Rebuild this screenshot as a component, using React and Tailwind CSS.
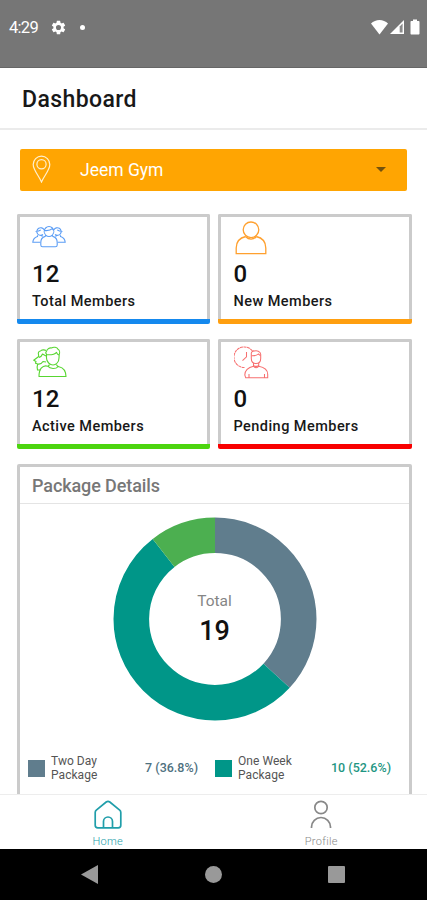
import { useState } from "react";

const stats = [
    { label: "Total Members", value: 12, icon: "group", bar: "bg-[#1589ee]" },
    { label: "New Members", value: 0, icon: "person", bar: "bg-[#ff9f0f]" },
    { label: "Active Members", value: 12, icon: "active", bar: "bg-[#4cd50f]" },
    { label: "Pending Members", value: 0, icon: "pending", bar: "bg-[#f80000]" },
];

const packages = [
    { name: "Two Day Package", count: 7, percent: "36.8%", color: "#607d8d", text: "text-[#4f7180]", width: "w-[170px]" },
    { name: "One Week Package", count: 10, percent: "52.6%", color: "#009688", text: "text-[#1f9683]", width: "w-[176px]" },
    { name: "One Month Package", count: 2, percent: "10.5%", color: "#4caf50", text: "text-[#4caf50]", width: "w-[170px]" },
];

const StatIcon = ({ name }) => {
    if (name === "group") {
        return (
            <svg className="w-[34px] h-[36px]" viewBox="0 0 34 36" fill="none" stroke="#5b9df5" strokeWidth="1.100">
                <path d="M13.500 14.700a4.800 4.800 0 1 1 7 0M12.300 10.500c3 .3 6.500-.2 8-1.800.4.8.8 1.300 1.400 1.700" />
                <path d="M13.700 15.200c2 1.600 4.600 1.600 6.600 0l.5 1.200c3 .8 4.400 3 4.400 6v2.600c0 1.200-.7 1.800-1.800 1.800H10.600c-1.100 0-1.800-.6-1.800-1.800v-2.600c0-3 1.400-5.200 4.400-6Z" />
                <path d="M11 14.500A3.800 3.800 0 1 1 12 9.800M5.500 15.200v1.300C2.200 17.500 1 19.500.8 22.200h7.500M3.600 11.500c2 0 4-.5 5.200-1.600M9 15.200l1.500 1.300" />
                <path d="M23 14.500a3.800 3.800 0 1 0-1-4.700M28.500 15.200v1.300c3.300 1 4.500 3 4.700 5.700h-7.500M30.400 11.500c-2 0-4-.5-5.200-1.600M25 15.200l-1.500 1.300" />
            </svg>
        );
    }
    if (name === "person") {
        return (
            <svg className="w-[34px] h-[36px]" viewBox="0 0 34 36" fill="none" stroke="#ffa02e" strokeWidth="1.300">
                <circle cx="17" cy="9.800" r="7.800" />
                <path d="M11.800 16.500C6 17.800 2.200 22 2.200 28v5.700h29.600V28c0-6-3.800-10.200-9.600-11.500" />
                <path d="M11.800 16.700c3 3.100 7.500 3.100 10.400 0" />
            </svg>
        );
    }
    if (name === "active") {
        return (
            <svg className="w-[35px] h-[36px]" viewBox="0 0 35 36" fill="none" stroke="#58d631" strokeWidth="1.100" strokeLinejoin="round">
                <path d="M14.500 6.500C15 3.500 18 2.500 19.500 3c2-1.500 5.500-.8 6.500 1.300 1.600.7 2 3.200 1.200 5.200l-.2 3.500c0 4-3 7-6 7s-6.500-3-6.500-7V9c-1-.6-1-1.800 0-2.500Z" />
                <path d="M14.800 9.700c4 .3 8-.4 9.700-2.400.5 1.500 1.300 2.300 2.500 2.700" />
                <path d="M17.500 19.500c-.3 1-.8 1.400-1.800 1.700-2.500-.8-5 .2-6.500 2-1.700 2-2.200 4.500-2.200 8.300h27c-.2-6-3-9-7-9.800-1.300-.2-2.200-1-2.600-2.200M15.700 21.200c2.500 3 8 3.200 10.600.3" />
                <path d="M14 5.500c-1.600-1-4.500-.8-5.500.5-2 .2-2.500 2-2 3.500l.2 2-5 3.700 2.300 1.300-.5 1.700 2.200.8c-.5 1.500-1 3.500-.2 6h3M7 12.500c1.500-.5 3-2 3.500-3.500l3.500 2M5.500 19c2.500.5 4.500-.8 5.500-2.500l3 .5" />
            </svg>
        );
    }
    return (
        <svg className="w-[36px] h-[36px]" viewBox="0 0 36 36" fill="none" stroke="#f77070" strokeWidth="1.050">
            <path d="M10.500 22.500A10.300 10.300 0 1 1 19 6.800" strokeDasharray="3 .5" />
            <path d="M12.500 7v4.800l-4 3.800" />
            <path d="M17.300 9c-.3-2 1.500-3.500 3.200-3 2-.7 6 .2 6.200 3.200v4.300c0 3-2 5-4.700 5s-4.700-2-4.700-5Z" />
            <path d="M17.500 10.700c3 .2 5.500-.3 6.800-1.700l2.200 1.700M19.500 18v3.300h5.200V18M19.500 20.500l2.500 1.500 2.700-1.500" />
            <path d="M19.500 21.300c-5.500 1.200-8.500 3.500-8.700 8.700l.9 2.800h22v-3.500c0-4.300-3.200-6.900-9-8M19.500 21.300c1.300 1.800 4 1.800 5.200 0M15 32.500v-3.500M30.500 32.500v-3.500" />
        </svg>
    );
};

const StatusBar = () => (
    <div className="h-[68px] shrink-0 bg-[#767676] border-b border-[#666] flex items-start pl-[9px] pr-[7px] pt-[17px] text-white">
        <span className="text-[16.500px] leading-[22px] tracking-[-0.700px]">4:29</span>
        <svg className="w-[17px] h-[17px] ml-[12px] mt-[1.500px]" viewBox="0 0 24 24" fill="currentColor">
            <path d="M19.140 12.940c.04-.3.060-.61.060-.94 0-.32-.02-.64-.07-.94l2.030-1.580a.49.49 0 0 0 .12-.61l-1.920-3.320a.488.488 0 0 0-.59-.22l-2.390.96c-.5-.38-1.030-.7-1.620-.94l-.36-2.540a.484.484 0 0 0-.48-.41h-3.840c-.24 0-.43.17-.47.41l-.36 2.540c-.59.24-1.130.57-1.620.94l-2.390-.96c-.22-.08-.47 0-.59.22L2.740 8.870c-.12.21-.08.47.12.61l2.030 1.580c-.05.3-.09.63-.09.94s.02.64.07.94l-2.030 1.580a.49.49 0 0 0-.12.61l1.920 3.320c.12.22.37.29.59.22l2.390-.96c.5.38 1.030.7 1.620.94l.36 2.540c.05.24.24.41.48.41h3.840c.24 0 .44-.17.47-.41l.36-2.540c.59-.24 1.130-.56 1.620-.94l2.390.96c.22.08.47 0 .59-.22l1.920-3.320c.12-.22.07-.47-.12-.61l-2.010-1.580zM12 15.600A3.600 3.600 0 1 1 12 8.400a3.600 3.600 0 0 1 0 7.200z" />
        </svg>
        <span className="size-[5px] rounded-full bg-white ml-[13px] mt-[8px]" />
        <div className="ml-auto flex items-start gap-px pt-[2px]">
            <svg className="w-[17px] h-[16px]" viewBox="0 0 17 16" fill="currentColor">
                <path d="M0 4.500C4.500-.2 12.500-.2 17 4.500L8.500 15.500Z" />
            </svg>
            <svg className="w-[16px] h-[16px]" viewBox="0 0 16 16">
                <path d="M15 1v14H1Z" fill="#fff" />
                <path d="M10.700 7.500 13.600 4.600v8.900h-2.900Z" fill="#8b8b8b" />
            </svg>
            <svg className="w-[10px] h-[16px] ml-[4px]" viewBox="0 0 10 16" fill="currentColor">
                <path d="M3 .5h4V2h1.500c.6 0 1 .4 1 1v11.500c0 .6-.4 1-1 1h-7c-.6 0-1-.4-1-1V3c0-.6.4-1 1-1H3Z" />
            </svg>
        </div>
    </div>
);

const Donut = () => {
    let start = 0;
    return (
        <div className="grid place-items-center mx-auto size-[204px]">
            <svg className="col-start-1 row-start-1 size-[204px] -rotate-90" viewBox="0 0 204 204" fill="none">
                {packages.map((p) => {
                    const offset = start;
                    start += p.count;
                    return (
                        <circle
                            key={p.name}
                            cx="102"
                            cy="102"
                            r="83.700"
                            stroke={p.color}
                            strokeWidth="35.600"
                            pathLength="19"
                            strokeDasharray={`${p.count} ${19 - p.count}`}
                            strokeDashoffset={-offset}
                        />
                    );
                })}
            </svg>
            <div className="col-start-1 row-start-1 flex flex-col items-center">
                <span className="text-[15.500px] leading-[20px] text-[#858585]">Total</span>
                <span className="text-[27px] leading-[32px] mt-[4px] font-medium text-[#111]">19</span>
            </div>
        </div>
    );
};

const App = () => {
    const [tab, setTab] = useState("home");

    return (
        <div className="w-full h-screen flex flex-col overflow-hidden bg-white font-['Roboto',sans-serif]">
            <StatusBar />
            <header className="h-[62px] shrink-0 border-b-2 border-[#ebebeb] pt-[2px] px-[22px] flex items-center">
                <h1 className="text-[23px] leading-none font-medium text-[#181818] tracking-[0.400px]">Dashboard</h1>
            </header>

            <main className="flex-1 min-h-0 overflow-hidden pt-[19px] px-[16.500px]">
                <button className="w-[387px] h-[42px] ml-[3.500px] rounded-[2px] bg-[#ffa502] flex items-center pl-[12px] pr-[21px] text-white">
                    <svg className="w-[19px] h-[28px] -mt-[2px]" viewBox="0 0 19 28" fill="none" stroke="#fff0cf" strokeWidth="1.200">
                        <path d="M9.500 27C7 21 1.200 15 1.200 9.500a8.300 8.300 0 0 1 16.600 0C17.800 15 12 21 9.500 27Z" />
                        <circle cx="9.500" cy="9.300" r="4.600" />
                    </svg>
                    <span className="ml-[29px] mt-px text-[17.500px] leading-none">Jeem Gym</span>
                    <svg className="w-[10px] h-[5px] ml-auto -mt-[2px]" viewBox="0 0 10 5" fill="#74520d">
                        <path d="M0 0h10L5 5Z" />
                    </svg>
                </button>

                <div className="grid grid-cols-2 gap-x-[8px] gap-y-[15px] w-[395px] mt-[23px]">
                    {stats.map((s) => (
                        <div key={s.label} className="h-[110px] flex flex-col">
                            <div className="flex-1 rounded-t-[2px] border-[3px] border-b-0 border-[#cbcbcb] pl-[12.500px] pt-[3px]">
                                <StatIcon name={s.icon} />
                                <p className="mt-[4px] text-[24px] leading-[28px] font-medium text-[#111]">{s.value}</p>
                                <p className="mt-[5px] text-[14.500px] leading-[18px] font-medium text-[#181818] tracking-[0.450px]">{s.label}</p>
                            </div>
                            <div className={`h-[5px] rounded-b-[2px] ${s.bar}`} />
                        </div>
                    ))}
                </div>

                <section className="mt-[15px] w-[395px] h-[420px] rounded-[2px] border-[3px] border-[#cbcbcb]">
                    <h2 className="h-[37px] border-b border-[#e4e4e4] pl-[12.500px] text-[18px] leading-[37px] font-medium text-[#777] tracking-[-0.100px]">
                        Package Details
                    </h2>
                    <div className="pt-[13px] pl-px">
                        <Donut />
                    </div>
                    <div className="grid grid-cols-[187px_187px] mt-[32px] pl-[8.500px] gap-y-[9px]">
                        {packages.map((p) => (
                            <div key={p.name} className={`flex items-center h-[30px] ${p.width}`}>
                                <span className="size-[17px]" style={{ backgroundColor: p.color }} />
                                <span className="w-[64px] ml-[6px] text-[12px] leading-[14.500px] tracking-[0.050px] text-[#555]">{p.name}</span>
                                <span className={`ml-auto text-[12.500px] leading-none font-medium ${p.text}`}>
                                    {p.count} ({p.percent})
                                </span>
                            </div>
                        ))}
                    </div>
                </section>
            </main>

            <nav className="h-[55px] shrink-0 border-t border-[#ededed] bg-white grid grid-cols-2">
                <button onClick={() => setTab("home")} className={`flex flex-col items-center pl-[2px] pt-[5px] ${tab === "home" ? "text-[#209eaa]" : "text-[#888]"}`}>
                    <svg className="w-[30px] h-[30px]" viewBox="0 0 30 30" fill="none" stroke="currentColor" strokeWidth="1.700" strokeLinejoin="round">
                        <path d="M2.200 12.500c0-1 .4-1.800 1.100-2.400L13.200 2c1.100-.9 2.500-.9 3.600 0l9.900 8.100c.7.600 1.100 1.400 1.100 2.400v12.700c0 1.600-1 2.600-2.600 2.600H4.800c-1.600 0-2.600-1-2.600-2.600Z" />
                        <path d="M10.500 27.800v-6.300a4.500 4.500 0 0 1 9 0v6.300" />
                    </svg>
                    <span className="mt-[5px] text-[11px] leading-[14px] tracking-[0.300px] font-light">Home</span>
                </button>
                <button onClick={() => setTab("profile")} className={`flex flex-col items-center pl-[2px] pt-[5px] ${tab === "profile" ? "text-[#209eaa]" : "text-[#888]"}`}>
                    <svg className="w-[30px] h-[30px]" viewBox="0 0 30 30" fill="none" stroke="currentColor" strokeWidth="1.700">
                        <circle cx="15" cy="7.500" r="6.200" />
                        <path d="M5.500 28v-1a9.500 9.500 0 0 1 19 0v1" />
                    </svg>
                    <span className="mt-[5px] text-[11px] leading-[14px] tracking-[0.300px] font-light">Profile</span>
                </button>
            </nav>

            <footer className="h-[51px] shrink-0 bg-black flex items-center justify-between pl-[81px] pr-[82px] text-[#999]">
                <svg className="w-[17px] h-[19px]" viewBox="0 0 17 19" fill="currentColor">
                    <path d="M17 0v19L0 9.500Z" />
                </svg>
                <span className="size-[17px] rounded-full bg-current" />
                <span className="size-[17px] rounded-[1px] bg-current" />
            </footer>
        </div>
    );
};

export default App;
